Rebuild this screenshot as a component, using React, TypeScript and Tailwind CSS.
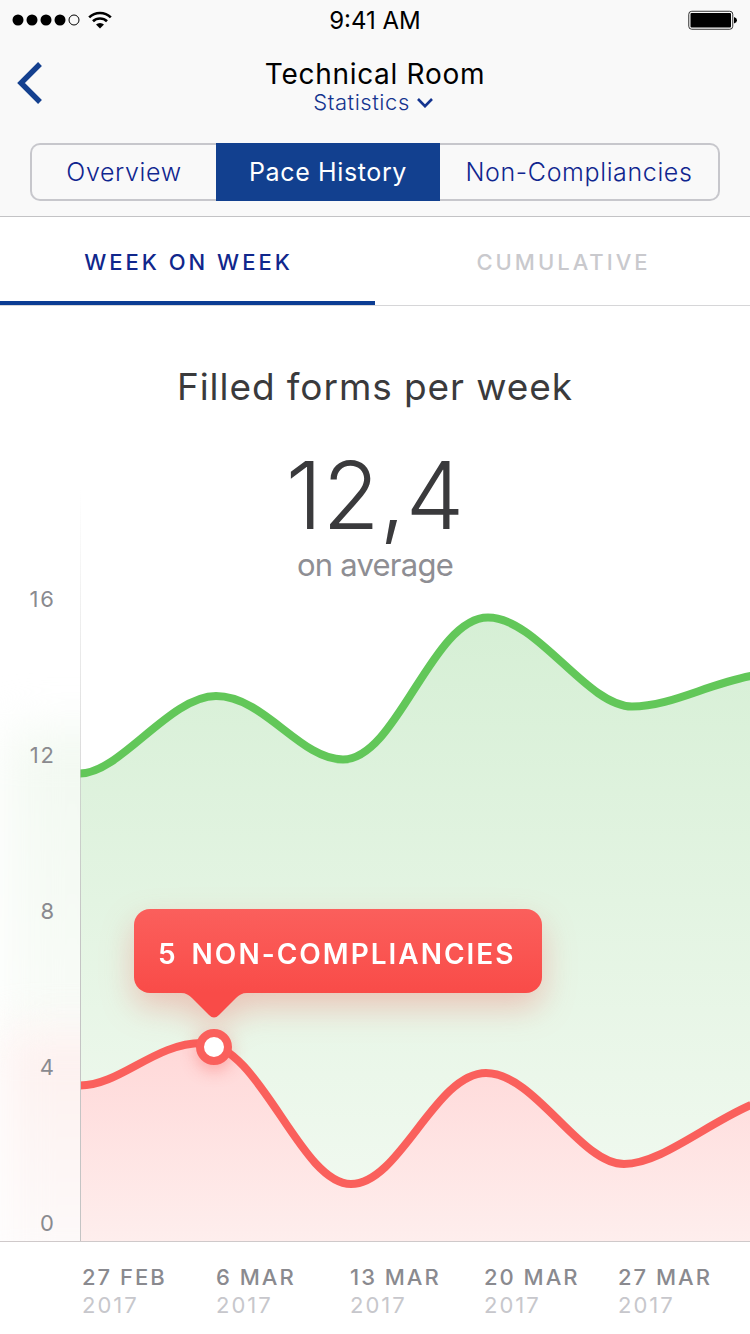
import React from "react";

const yTicks = ["16", "12", "8", "4", "0"];

const weeks = [
  { day: "27 FEB", year: "2017" },
  { day: "6 MAR", year: "2017" },
  { day: "13 MAR", year: "2017" },
  { day: "20 MAR", year: "2017" },
  { day: "27 MAR", year: "2017" },
];

const formsLine =
  "M0 188.5 C40 188.5 90 111 136 111 C184 111 220 174.5 263 174.5 C317 174.5 352 32.5 408 32.5 C457 32.5 507 121.5 552 121.5 C590 121.5 625 100 671 91";
const issuesLine =
  "M0 500.5 C40 500.5 75 458 122 458 C180 458 220 599 271 599 C320 599 355 488 406 488 C455 488 500 579 544 579 C580 579 625 540 671 520";

function StatusBar() {
  return (
    <div className="grid h-10 grid-cols-3 items-center px-3 text-black">
      <div className="flex items-center gap-2">
        <svg className="h-3 w-[68px]" viewBox="0 0 68 12" aria-hidden="true">
          <circle cx="6" cy="6" r="5.5" />
          <circle cx="20" cy="6" r="5.5" />
          <circle cx="34" cy="6" r="5.5" />
          <circle cx="48" cy="6" r="5.5" />
          <circle cx="62" cy="6" r="5" fill="none" stroke="black" strokeWidth="1" />
        </svg>
        <svg className="h-[18px] w-6" viewBox="0 0 24 18" fill="none" stroke="black" strokeWidth="2.6" aria-hidden="true">
          <path d="M1.2 6.4 A15.4 15.4 0 0 1 22.8 6.4" />
          <path d="M5 10.3 A10 10 0 0 1 19 10.3" />
          <path d="M12 17.6 L8 13.6 A5.7 5.7 0 0 1 16 13.6 Z" fill="black" stroke="none" />
        </svg>
      </div>
      <span className="pt-[2px] text-center text-[24px] leading-7">9:41 AM</span>
      <svg className="h-5 w-[50px] justify-self-end" viewBox="0 0 50 20" aria-hidden="true">
        <rect x="0.75" y="1.25" width="44" height="18" rx="3" fill="none" stroke="#333" strokeWidth="1" />
        <rect x="2.5" y="3" width="40.5" height="14.5" rx="1" />
        <path d="M46 7 Q49 8 49 10.25 Q49 12.5 46 13.5 Z" />
      </svg>
    </div>
  );
}

function Header() {
  return (
    <header className="border-b border-[#c3c3c5] bg-[#f9f9f9] pb-[15px]">
      <StatusBar />
      <div className="grid grid-cols-[60px_1fr_60px] items-center pt-4">
        <button type="button" aria-label="Back" className="pb-[2px] pl-4">
          <svg className="h-11 w-7" viewBox="0 0 28 44" fill="none" stroke="#14408f" strokeWidth="5.4" aria-hidden="true">
            <path d="M24 3 L5 22 L24 41" />
          </svg>
        </button>
        <div className="flex flex-col items-center">
          <h1 className="text-[28px] font-normal leading-9 tracking-wide text-black">Technical Room</h1>
          <button type="button" className="flex items-center gap-[7px] pr-1 text-[22px] font-light leading-5 tracking-wide text-[#14348f]">
            Statistics
            <svg className="h-3 w-4" viewBox="0 0 16 12" fill="none" stroke="#14348f" strokeWidth="2.6" aria-hidden="true">
              <path d="M1 3 L8 10.2 L15 3" />
            </svg>
          </button>
        </div>
      </div>
      <nav className="mx-[30px] mt-[31px] grid h-[58px] grid-cols-[186fr_224fr_280fr] text-[25px] leading-8 tracking-wide text-[#10268f]">
        <button type="button" className="rounded-l-[10px] border-2 border-r-0 border-[#c7c7cc] font-light">
          Overview
        </button>
        <button type="button" aria-current="page" className="bg-[#12408f] text-white">
          Pace History
        </button>
        <button type="button" className="rounded-r-[10px] border-2 border-l-0 border-[#c7c7cc] font-light">
          Non-Compliancies
        </button>
      </nav>
    </header>
  );
}

function Tabs() {
  return (
    <div role="tablist" className="grid h-[89px] grid-cols-2 border-b border-[#d6d6d8] text-[22px] tracking-[3px]">
      <button type="button" role="tab" aria-selected="true" className="border-b-4 border-[#0b3c93] pt-1.5 pl-[2px] font-medium text-[#10278c]">
        WEEK ON WEEK
      </button>
      <button type="button" role="tab" aria-selected="false" className="border-b-4 border-transparent pt-1.5 pl-[2px] font-medium text-[#c9c9cd]">
        CUMULATIVE
      </button>
    </div>
  );
}

function Tooltip() {
  return (
    <div className="absolute bottom-[54px] left-[-80px] drop-shadow-[0_14px_16px_rgba(240,70,60,0.28)]">
      <div className="flex h-[84px] w-[408px] items-center gap-4 rounded-2xl bg-linear-to-b from-[#fb5f5c] to-[#f94b48] px-6 pt-1.5 text-[28px] font-semibold whitespace-nowrap text-white">
        <span>5</span>
        <span className="tracking-[2px]">NON-COMPLIANCIES</span>
      </div>
      <svg className="absolute top-full left-[47px] -mt-px h-[27px] w-[66px]" viewBox="0 0 66 27" fill="#f94b48" aria-hidden="true">
        <path d="M0 0 V1 C5 1 8 3 11 6 L28 23 Q33 28 38 23 L55 6 C58 3 61 1 66 1 V0 Z" />
      </svg>
    </div>
  );
}

function Chart() {
  return (
    <div className="relative grid h-[657px] grid-cols-[80px_1fr] border-b border-[#cfc9ca]">
      <div className="relative">
        <div className="absolute inset-x-0 -top-10 bottom-0 overflow-hidden" aria-hidden="true">
          <div className="absolute top-[185px] -right-14 left-2 h-[310px] bg-linear-to-b from-[#f2f9f1] to-[#f9fcf8] blur-[24px]" />
          <div className="absolute top-[485px] -right-14 left-1 h-[250px] bg-linear-to-b from-[#fdf0ee] to-[#fdfbfb] blur-[22px]" />
        </div>
        <ul className="relative flex h-full flex-col justify-between pr-6 pb-1 text-right text-[22px] leading-7 tracking-[2px] text-[#8a8a8f]">
          {yTicks.map((tick) => (
            <li key={tick}>{tick}</li>
          ))}
        </ul>
      </div>
      <div className="relative">
        <svg className="block h-full w-full" viewBox="0 0 670 656" preserveAspectRatio="none" fill="none" role="img" aria-label="Filled forms and non-compliancies per week">
          <defs>
            <linearGradient id="forms" gradientUnits="userSpaceOnUse" x1="0" y1="32" x2="0" y2="600">
              <stop offset="0" stopColor="#d6efd5" />
              <stop offset="1" stopColor="#f0f9ef" />
            </linearGradient>
            <linearGradient id="issues" gradientUnits="userSpaceOnUse" x1="0" y1="458" x2="0" y2="656">
              <stop offset="0" stopColor="#ffd8d8" />
              <stop offset="1" stopColor="#feeeed" />
            </linearGradient>
          </defs>
          <path d={formsLine + " V656 H0 Z"} fill="url(#forms)" />
          <path d={issuesLine + " V656 H0 Z"} fill="url(#issues)" />
          <path d={formsLine} stroke="#62c759" strokeWidth="8" vectorEffect="non-scaling-stroke" />
          <path d={issuesLine} stroke="#fa605c" strokeWidth="8" vectorEffect="non-scaling-stroke" />
        </svg>
        <div className="absolute -top-24 bottom-0 left-0 w-px bg-linear-to-b from-transparent to-[#c4c4c4] to-60%" />
        <div className="absolute top-[462px] left-1/5">
          <Tooltip />
          <span className="absolute -top-[18px] -left-[18px] size-9 rounded-full border-8 border-[#fa605c] bg-white shadow-[0_6px_16px_rgba(250,80,76,0.35)]" />
        </div>
      </div>
    </div>
  );
}

export default function App() {
  return (
    <div className="min-h-screen overflow-x-hidden bg-white font-['Inter',sans-serif]">
      <Header />
      <Tabs />
      <main>
        <section className="flex flex-col items-center pt-[55px] text-[#3a3a3c]">
          <h2 className="text-[37px] leading-[52px] tracking-wide">Filled forms per week</h2>
          <p className="mt-8 text-[93px] leading-[100px] font-light">12,4</p>
          <p className="mt-[2px] mb-[2px] text-[31px] leading-9 tracking-tight text-[#8e8e93]">on average</p>
        </section>
        <Chart />
        <ol className="grid grid-cols-5 pt-[21px] pb-3 pl-20 text-[22px] leading-7">
          {weeks.map((week) => (
            <li key={week.day} className="flex flex-col pl-[2px] tracking-[2px]">
              <span className="font-medium text-[#8a8a8f]">{week.day}</span>
              <span className="text-[#c7c7cc]">{week.year}</span>
            </li>
          ))}
        </ol>
      </main>
    </div>
  );
}
